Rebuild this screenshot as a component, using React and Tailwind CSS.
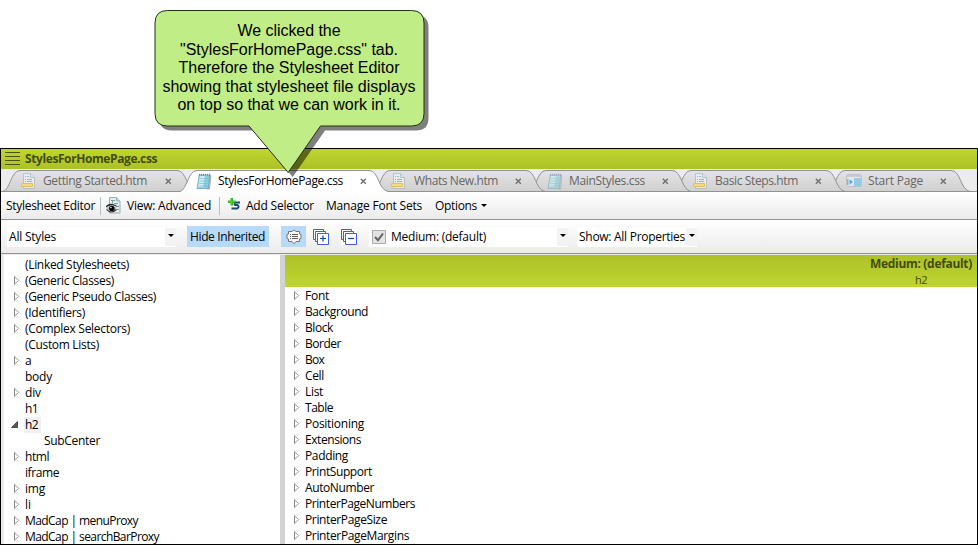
import { useLayoutEffect, useRef } from "react";

// Text whose tracking is tuned so that it fills exactly w pixels.
function Fit({ w, className = "", children }) {
  const ref = useRef(null);
  useLayoutEffect(() => {
    const el = ref.current;
    const fit = () => {
      el.style.letterSpacing = "0px";
      const n = el.textContent.length;
      el.style.letterSpacing = (w - el.getBoundingClientRect().width) / n + "px";
    };
    fit();
    document.fonts.ready.then(fit);
  }, [w]);
  return (
    <span className="block shrink-0" style={{ width: w }}>
      <span ref={ref} className={"inline-block whitespace-pre " + className}>{children}</span>
    </span>
  );
}

function PageIcon() {
  return (
    <svg width="16" height="18" viewBox="0 0 16 18" className="shrink-0 opacity-70">
      <path d="M2.5 1.5h7l4 4v11h-11z" fill="#eef3f3" stroke="#a3b9bb" />
      <path d="M9.5 1.5v4h4" fill="#dfe9e9" stroke="#a3b9bb" />
      <path d="M4 4.5h1M6 4.5h2M4 7.5h1M6 7.5h5M4 9.5h1M6 9.5h5" stroke="#8ea3a8" />
      <path d="M.5 11.5h11v3H.5z" fill="#ffe14f" stroke="#e8b52c" />
    </svg>
  );
}

function NotepadIcon({ dim }) {
  return (
    <svg width="16" height="17" viewBox="0 0 16 17" className={dim ? "shrink-0 opacity-60" : "shrink-0"}>
      <path d="M4 2.5h11L13.5 16H11z" fill="#c3c6c6" stroke="#8d9999" strokeWidth=".7" />
      <path d="M3.2 2h10.6l-1.6 13.5H1z" fill="#8fd0e0" stroke="#5f9fb3" strokeWidth=".7" />
      <path d="M4 3h5L7 14H2z" fill="#c9eef5" />
      <path d="M4 5.5h9M3.6 8h9M3.2 10.500h9M3 13h9" stroke="#6fb5ca" strokeWidth=".6" />
      <path d="M3.500 2.500V.8M5.500 2.500V.8M7.500 2.500V.8M9.500 2.500V.8M11.500 2.500V.8M13.500 2.500V.8" stroke="#66797e" strokeWidth=".9" />
    </svg>
  );
}

function StartIcon() {
  return (
    <svg width="16" height="13" viewBox="0 0 16 13" className="mb-px shrink-0 opacity-80">
      <rect x=".5" y=".5" width="15" height="12" rx="1" fill="#e9edef" stroke="#b9bcbe" />
      <path d="M1 1h14v2H1z" fill="#c4c6c7" />
      <path d="M1.500 4H7v8H1.500z" fill="#d5ebf6" />
      <path d="M8 4h7v8H8z" fill="#85c5e5" />
      <path d="M3.500 5.500v5L7 8z" fill="#3d9dd0" />
      <path d="M1.800 5v6" stroke="#3d9dd0" />
    </svg>
  );
}

function ViewIcon() {
  return (
    <svg width="15" height="17" viewBox="0 0 15 17" className="shrink-0">
      <path d="M3.500.5h7l3.500 3.500v12H3.500z" fill="#e4efef" stroke="#94b0b2" />
      <path d="M10.500.5V4H14" fill="#cfdfe0" stroke="#94b0b2" />
      <path d="M5 3.500h4M6.500 3.500v3M8 6.500h4M11 9.500h2M11 12.500h2" stroke="#7b9da2" />
      <path d="M0 9q4-4 10.500-.5l1 1.500Q5.500 6.500 0 10.500z" fill="#222" />
      <ellipse cx="5.500" cy="11.800" rx="5" ry="2.800" fill="#b9c0bd" />
      <circle cx="5.800" cy="11.500" r="2.800" fill="#080808" />
      <path d="M.5 12.500Q5 17.500 10.500 12.500" fill="none" stroke="#333" strokeWidth="1.100" />
      <circle cx="4.900" cy="10.500" r=".8" fill="#fff" />
    </svg>
  );
}

function AddSelectorIcon() {
  return (
    <svg width="13" height="13" viewBox="0 0 13 13" className="mb-[3px] shrink-0">
      <path d="M12 4.500H7.500Q5.500 6 7.500 7h2q2.500 2-.5 3.500H3.500" fill="none" stroke="#174e6e" strokeWidth="2" />
      <path d="M2.500 0h2.500v2.500h2.500v2.500H5v2.500H2.500V5H0V2.500h2.500z" fill="#2bb21c" />
      <path d="M3.700 .8V6.700M.8 3.700h6" stroke="#62d443" strokeWidth=".8" />
    </svg>
  );
}

function CommentIcon() {
  return (
    <svg width="16" height="16" viewBox="0 0 16 16" className="shrink-0">
      <path d="M2.500 2.500H6L8 .8l2 1.700h3.500V5l1.500.5v4l-1.500.5v2.500H10L8 14.700 6 12.500H2.500V10L1 9.500v-4L2.500 5z" fill="#f8f8f6" stroke="#77736b" />
      <path d="M6 5.500h6M6 7.500h6M6 9.500h6" stroke="#5f5b55" />
      <path d="M4 5.500h1M4 7.500h1M4 9.500h1" stroke="#5f5b55" />
    </svg>
  );
}

function StackIcon({ plus }) {
  return (
    <svg width="16" height="16" viewBox="0 0 16 16" className={"shrink-0 " + (plus ? "" : "bg-white")} fill="none" stroke="#3a5fe0">
      <path d="M.5.5h10v10H.5z" fill="#fff" />
      <path d="M2.500 2.500h10v10h-10z" fill="#fff" />
      <path d="M4.500 4.500h11v11h-11z" fill="#fff" />
      <path d={plus ? "M7 9.500h6M10 6.500v6" : "M7 9.500h6"} stroke="#1c3f9c" strokeWidth="1.200" />
    </svg>
  );
}

function Caret() {
  return (
    <svg width="6" height="3" viewBox="0 0 6 3" className="shrink-0">
      <path d="M0 0h6L3 3z" fill="#000" />
    </svg>
  );
}

function Drop() {
  return (
    <span className="flex h-[18px] w-[11px] shrink-0 items-center justify-center bg-[#f3f3f3] pb-[2px]">
      <Caret />
    </span>
  );
}

const tabs = [
  { name: "Getting Started.htm", pitch: 177, w: 193, pad: 18, gap: 6, tw: 104, x: 162, icon: "page", z: "z-[6]" },
  { name: "StylesForHomePage.css", pitch: 193, w: 208, pad: 16, gap: 6, tw: 125, x: 180, icon: "note", active: true, z: "z-[9]" },
  { name: "Whats New.htm", pitch: 156, w: 172, pad: 18, gap: 7, tw: 84, x: 142, icon: "page", z: "z-[5]" },
  { name: "MainStyles.css", pitch: 145, w: 162, pad: 18, gap: 6, tw: 76, x: 133, icon: "note", z: "z-[4]" },
  { name: "Basic Steps.htm", pitch: 154, w: 171, pad: 19, gap: 6, tw: 83, x: 141, icon: "page", z: "z-[3]" },
  { name: "Start Page", pitch: 142, w: 142, pad: 18, gap: 6, tw: 55, x: 112, icon: "start", z: "z-[2]" },
];

function Tab({ t }) {
  const w = t.w;
  const d = `M0 22.500C7 21 8 1.500 17 1.500H${w - 19}C${w - 9} 1.500 ${w - 10} 20.500 ${w} 22.500`;
  return (
    <div style={{ width: t.pitch }} className={"relative h-[23px] shrink-0 " + t.z}>
      <svg width={w} height="23" className="absolute left-0 top-0">
        <defs>
          <linearGradient id="tabfill" x1="0" y1="0" x2="0" y2="1">
            <stop offset="0" stopColor="#e4e4e4" />
            <stop offset="1" stopColor="#d0d0d0" />
          </linearGradient>
        </defs>
        <path d={d + (t.active ? "V23H0z" : "z")} fill={t.active ? "#fff" : "url(#tabfill)"} />
        <path d={d + (t.active ? "" : "z")} fill="none" stroke="#929292" />
      </svg>
      <div style={{ paddingLeft: t.pad, columnGap: t.gap }} className="relative flex h-6 items-center">
        {t.icon === "page" ? <PageIcon /> : t.icon === "note" ? <NotepadIcon dim={!t.active} /> : <StartIcon />}
        <Fit w={t.tw} className={t.active ? "text-black" : "text-[#666]"}>{t.name}</Fit>
        <svg width="7" height="7" viewBox="0 0 7 7" style={{ marginLeft: t.x - t.pad - 16 - t.tw - t.gap * 2 }} className="shrink-0">
          <path d="M.8.8l5 5M5.800.8l-5 5" stroke="#6c6c6c" strokeWidth="1.300" />
        </svg>
      </div>
    </div>
  );
}

const selectors = [
  ["(Linked Stylesheets)", 104, 0],
  ["(Generic Classes)", 89, 1],
  ["(Generic Pseudo Classes)", 131, 1],
  ["(Identifiers)", 60, 1],
  ["(Complex Selectors)", 105, 1],
  ["(Custom Lists)", 74, 0],
  ["a", 6, 1],
  ["body", 27, 0],
  ["div", 16, 1],
  ["h1", 13, 0],
  ["h2", 13, 2],
  ["SubCenter", 56, 3],
  ["html", 24, 1],
  ["iframe", 34, 0],
  ["img", 20, 1],
  ["li", 6, 1],
  ["MadCap | menuProxy", 113, 1],
  ["MadCap | searchBarProxy", 134, 1],
];

const properties = [
  ["Font", 24], ["Background", 63], ["Block", 28], ["Border", 36], ["Box", 19], ["Cell", 19],
  ["List", 18], ["Table", 28], ["Positioning", 59], ["Extensions", 56], ["Padding", 43],
  ["PrintSupport", 67], ["AutoNumber", 69], ["PrinterPageNumbers", 110], ["PrinterPageSize", 82],
  ["PrinterPageMargins", 104],
];

function Row({ label, w, kind }) {
  return (
    <div className={"flex h-4 items-center " + (kind === 3 ? "pl-[19px]" : "")}>
      <span className="flex w-[14px] shrink-0">
        {kind === 1 && (
          <svg width="6" height="9" viewBox="0 0 6 9" className="mb-px ml-[3px]">
            <path d="M.5.8v7.400L4.700 4.500z" fill="#fff" stroke="#a0a0a0" />
            <path d="M.5.3v8.400" stroke="#8a8a8a" />
          </svg>
        )}
        {kind === 2 && (
          <svg width="7" height="7" viewBox="0 0 7 7" className="mb-px">
            <path d="M6.500.5v6h-6z" fill="#595959" stroke="#333" strokeWidth=".8" />
          </svg>
        )}
      </span>
      <span className={kind === 2 ? "-ml-px bg-[#f0f0f0] pl-px pr-[3px]" : ""}>
        <Fit w={w} className="leading-4">{label}</Fit>
      </span>
    </div>
  );
}

const Divider = () => <span className="h-[18px] w-px shrink-0 bg-[#b9bcc6]" />;

const bubble =
  "M167.500 10.500H411.500Q424 10.500 424 23V113.500Q424 126 411.500 126H320.500L288.200 172.500L249 126H167.500Q155 126 155 113.500V23Q155 10.500 167.500 10.500z";

export default function App() {
  return (
    <div className="relative h-[545px] w-[978px] overflow-hidden bg-white pt-[148px] font-['Open_Sans','Noto_Sans',sans-serif] text-[12px] leading-4 text-black">
      <div className="flex h-[397px] flex-col border border-black">
        <div className="flex h-5 shrink-0 items-center bg-linear-to-b from-[#bfd62f] to-[#adc128] pl-1">
          <svg width="16" height="14" viewBox="0 0 16 14" className="mr-1 shrink-0">
            <path d="M0 .5h15M0 4.500h15M0 8.500h15M0 12.500h15" stroke="#4b5512" />
          </svg>
          <Fit w={132} className="font-bold text-[#434c10]">StylesForHomePage.css</Fit>
        </div>

        <div className="relative flex h-[23px] shrink-0 bg-[#ececec] pl-[2px]">
          <div className="absolute inset-x-0 bottom-0 h-px bg-[#929292]" />
          {tabs.map((t) => <Tab key={t.name} t={t} />)}
        </div>

        <div className="flex h-[28px] shrink-0 items-center border-b border-[#929292] bg-linear-to-b from-white to-[#ebebeb] pl-[5px]">
          <Fit w={89}>Stylesheet Editor</Fit>
          <span className="w-[5px]" />
          <Divider />
          <span className="w-[5px]" />
          <ViewIcon />
          <span className="w-[6px]" />
          <Fit w={84}>View: Advanced</Fit>
          <span className="w-[8px]" />
          <Divider />
          <span className="w-[8px]" />
          <AddSelectorIcon />
          <span className="w-[5px]" />
          <Fit w={68}>Add Selector</Fit>
          <span className="w-[12px]" />
          <Fit w={96}>Manage Font Sets</Fit>
          <span className="w-[13px]" />
          <Fit w={42}>Options</Fit>
          <span className="w-[4px]" />
          <Caret />
        </div>

        <div className="flex h-[34px] shrink-0 items-center border-b border-[#929292] bg-linear-to-b from-white to-[#ebebeb] pl-[6px]">
          <div className="flex h-5 w-[169px] items-center justify-between bg-white pl-[2px]">
            <Fit w={47}>All Styles</Fit>
            <Drop />
          </div>
          <div className="ml-[11px] flex h-[21px] w-[82px] items-center bg-[#b8daf9] pl-[3px]">
            <Fit w={75}>Hide Inherited</Fit>
          </div>
          <div className="ml-[12px] flex h-[21px] w-[25px] items-center justify-center bg-[#b8daf9]">
            <CommentIcon />
          </div>
          <span className="w-[7px]" />
          <StackIcon plus />
          <span className="w-[12px]" />
          <StackIcon />
          <div className="ml-[12px] flex h-5 w-[199px] items-center bg-white pl-[3px]">
            <svg width="14" height="14" viewBox="0 0 14 14" className="mr-[5px] shrink-0">
              <path d="M.5.5h13v13H.5z" fill="#e3e3e3" stroke="#acacac" />
              <path d="M3 7l3 3.200L11 3.500" fill="none" stroke="#636363" strokeWidth="2" />
            </svg>
            <Fit w={95}>Medium: (default)</Fit>
            <span className="grow" />
            <Drop />
          </div>
          <div className="ml-[9px] flex h-5 w-[120px] items-center bg-white pl-[2px]">
            <Fit w={106}>Show: All Properties</Fit>
            <span className="grow" />
            <Drop />
          </div>
        </div>

        <div className="flex min-h-0 grow border-t border-[#ececec]">
          <div className="w-[3px] shrink-0 bg-[#efe9e9]" />
          <div className="w-[276px] shrink-0 overflow-hidden pl-[7px] pt-[2px]">
            {selectors.map(([l, w, k]) => <Row key={l} label={l} w={w} kind={k} />)}
          </div>
          <div className="w-[5px] shrink-0 bg-[#d2d2d2]" />
          <div className="min-w-0 grow overflow-hidden">
            <div className="flex h-8 justify-end bg-linear-to-b from-[#adc128] to-[#bfd62f] pr-[5px] text-[#434c10]">
              <div className="flex flex-col items-center pt-px">
                <Fit w={102} className="font-bold">Medium: (default)</Fit>
                <Fit w={12} className="text-[11px] leading-[15px]">h2</Fit>
              </div>
            </div>
            <div className="pl-[6px] pt-px">
              {properties.map(([l, w]) => <Row key={l} label={l} w={w} kind={1} />)}
            </div>
          </div>
        </div>
      </div>

      <svg width="440" height="185" className="absolute left-0 top-0 z-20">
        <path d={bubble} transform="translate(4.500 4.500)" fill="#000" fillOpacity=".5" />
        <path d={bubble} fill="#c1ed86" stroke="#26301a" />
      </svg>
      <div className="absolute left-[154px] top-[22px] z-30 flex w-[270px] flex-col items-center font-['Liberation_Sans',Arial,sans-serif] text-[16px] leading-[18.600px]">
        <Fit w={103}>We clicked the</Fit>
        <Fit w={218}>"StylesForHomePage.css" tab.</Fit>
        <Fit w={221}>Therefore the Stylesheet Editor</Fit>
        <Fit w={253}>showing that stylesheet file displays</Fit>
        <Fit w={223}>on top so that we can work in it.</Fit>
      </div>
    </div>
  );
}
